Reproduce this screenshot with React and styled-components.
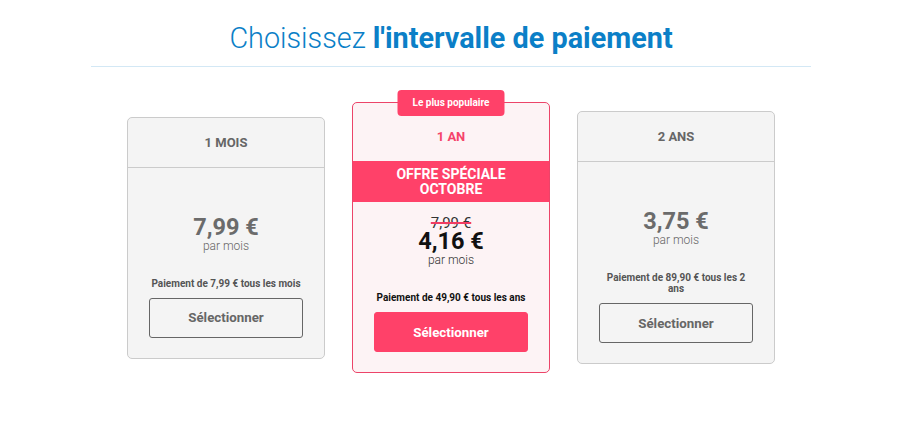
import React from "react";
import styled, { createGlobalStyle } from "styled-components";

const Global = createGlobalStyle`
  html, body { margin: 0; padding: 0; background: #fff; }
  body { font-family: Roboto, "Liberation Sans", Arial, sans-serif; }
`;

const Page = styled.div`
  width: 902px;
  padding-top: 21px;
`;

const Title = styled.h1`
  margin: 0;
  text-align: center;
  font-size: 28.8px;
  line-height: 35px;
  font-weight: 300;
  color: #0b7fc7;
  b { font-weight: 700; }
`;

const Divider = styled.hr`
  width: 720px;
  margin: 10px auto 0;
  border: 0;
  border-top: 1px solid #d3e8f5;
`;

const Cards = styled.div`
  display: flex;
  justify-content: center;
  align-items: center;
  gap: 27px;
  margin-top: 35px;
`;

const Card = styled.div`
  position: relative;
  width: 198px;
  box-sizing: border-box;
  border: 1px solid ${p => (p.$hot ? "#ec4469" : "#cbcbcb")};
  background: ${p => (p.$hot ? "#fdf3f5" : "#f4f4f4")};
  border-radius: 5px;
  display: flex;
  flex-direction: column;
  text-align: center;
`;

const Badge = styled.div`
  position: absolute;
  top: -13px;
  left: 50%;
  transform: translateX(-50%);
  width: 107px;
  height: 26px;
  box-sizing: border-box;
  border-radius: 4px;
  background: #ff4169;
  color: #fff;
  font-size: 10px;
  font-weight: 700;
  line-height: 26px;
  white-space: nowrap;
`;

const Header = styled.div`
  height: 49px;
  padding-top: ${p => (p.$hot ? "9px" : "0")};
  display: flex;
  align-items: center;
  justify-content: center;
  font-size: 13px;
  font-weight: 700;
  color: ${p => (p.$hot ? "#f5436a" : "#666")};
  border-bottom: ${p => (p.$hot ? "0" : "1px solid #cbcbcb")};
`;

const Banner = styled.div`
  background: #ff4169;
  color: #fff;
  font-size: 14px;
  font-weight: 700;
  line-height: 15px;
  padding: 5.5px 0;
`;

const Body = styled.div`
  padding: ${p => (p.$hot ? "14px" : "47px")} 21px 20px;
  display: flex;
  flex-direction: column;
  align-items: stretch;
`;

const OldPrice = styled.div`
  font-size: 15px;
  line-height: 14px;
  height: 14px;
  margin-bottom: -1px;
  color: #333;
  span {
    text-decoration: line-through;
    text-decoration-color: #f23c63;
    text-decoration-thickness: 2px;
  }
`;

const Price = styled.div`
  font-size: 23.5px;
  line-height: 24px;
  font-weight: 700;
  color: ${p => (p.$hot ? "#111" : "#6b6b6b")};
`;

const Per = styled.div`
  font-size: 12px;
  line-height: 14px;
  font-weight: 300;
  color: ${p => (p.$hot ? "#333" : "#666")};
`;

const Pay = styled.div`
  margin-top: 25px;
  font-size: 10px;
  line-height: 11px;
  font-weight: 700;
  color: ${p => (p.$hot ? "#111" : "#555")};
`;

const Button = styled.button`
  margin-top: 9px;
  height: 40px;
  border-radius: 3px;
  font-family: inherit;
  font-size: 13.3px;
  font-weight: 700;
  cursor: pointer;
  border: 1px solid ${p => (p.$hot ? "#ff4169" : "#666")};
  background: ${p => (p.$hot ? "#ff4169" : "transparent")};
  color: ${p => (p.$hot ? "#fff" : "#666")};
`;

const plans = [
  { name: "1 MOIS", price: "7,99 €", pay: "Paiement de 7,99 € tous les mois" },
  {
    name: "1 AN",
    hot: true,
    old: "7,99 €",
    price: "4,16 €",
    pay: "Paiement de 49,90 € tous les ans",
  },
  { name: "2 ANS", price: "3,75 €", pay: "Paiement de 89,90 € tous les 2 ans" },
];

export default function App() {
  return (
    <Page>
      <Global />
      <Title>
        Choisissez <b>l'intervalle de paiement</b>
      </Title>
      <Divider />
      <Cards>
        {plans.map(p => (
          <Card key={p.name} $hot={p.hot}>
            {p.hot && <Badge>Le plus populaire</Badge>}
            <Header $hot={p.hot}>{p.name}</Header>
            {p.hot && (
              <Banner>
                OFFRE SPÉCIALE
                <br />
                OCTOBRE
              </Banner>
            )}
            <Body $hot={p.hot}>
              {p.old && (
                <OldPrice>
                  <span>{p.old}</span>
                </OldPrice>
              )}
              <Price $hot={p.hot}>{p.price}</Price>
              <Per $hot={p.hot}>par mois</Per>
              <Pay $hot={p.hot}>{p.pay}</Pay>
              <Button $hot={p.hot}>Sélectionner</Button>
            </Body>
          </Card>
        ))}
      </Cards>
    </Page>
  );
}
